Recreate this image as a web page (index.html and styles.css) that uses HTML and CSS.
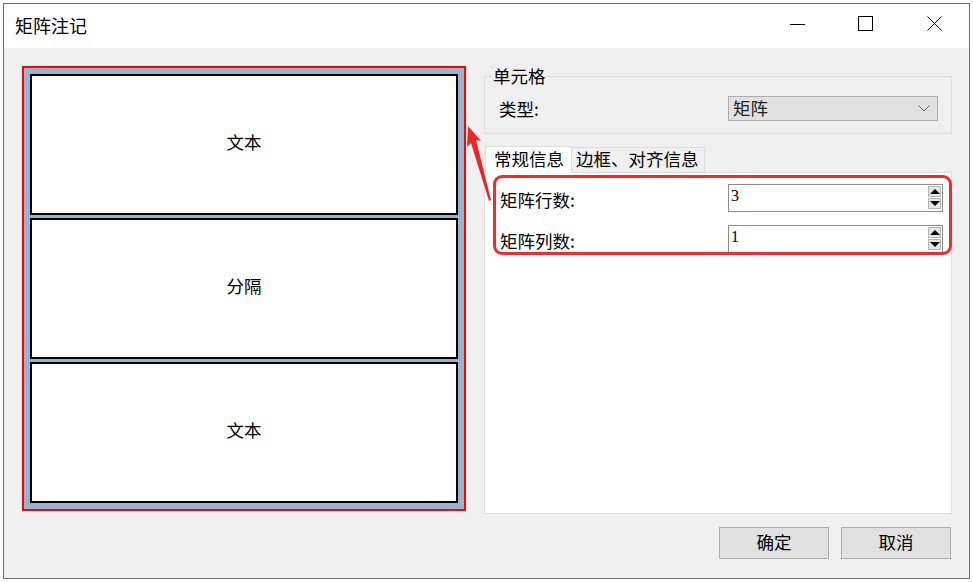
FILE: index.html
```html
<!DOCTYPE html>
<html>
<head>
    <title>矩阵注记</title>
    <link rel="stylesheet" href="styles.css">
</head>
<body>
    <div class="window">
        <div class="titlebar">
            <span class="title">矩阵注记</span>
            <div class="controls">
                <span class="ctl ctl-min">
                    <svg width="15" height="15" viewBox="0 0 15 15"><path d="M0 8.5h15" stroke="#000" stroke-width="1"/></svg>
                </span>
                <span class="ctl ctl-max">
                    <svg width="15" height="15" viewBox="0 0 15 15"><rect x="0.5" y="0.5" width="14" height="14" fill="none" stroke="#000" stroke-width="1"/></svg>
                </span>
                <span class="ctl ctl-close">
                    <svg width="15" height="15" viewBox="0 0 15 15"><path d="M0.5 0.5l14 14M14.5 0.5l-14 14" stroke="#000" stroke-width="1"/></svg>
                </span>
            </div>
        </div>

        <div class="client">
            <div class="preview">
                <div class="cell">文本</div>
                <div class="cell">分隔</div>
                <div class="cell">文本</div>
            </div>

            <div class="side">
                <fieldset class="group">
                    <legend>单元格</legend>
                    <div class="field-row">
                        <label>类型:</label>
                        <div class="combo">
                            <span>矩阵</span>
                            <svg width="12" height="7" viewBox="0 0 12 7"><path d="M0.5 0.5l5.5 5.5 5.5-5.5" fill="none" stroke="#606060" stroke-width="1"/></svg>
                        </div>
                    </div>
                </fieldset>

                <div class="tabs">
                    <span class="tab active">常规信息</span>
                    <span class="tab">边框、对齐信息</span>
                </div>

                <div class="tab-panel">
                    <div class="spin-row">
                        <label>矩阵行数:</label>
                        <div class="spin">
                            <span class="spin-value">3</span>
                            <span class="spin-btns"><span class="up"></span><span class="down"></span></span>
                        </div>
                    </div>
                    <div class="spin-row">
                        <label>矩阵列数:</label>
                        <div class="spin">
                            <span class="spin-value">1</span>
                            <span class="spin-btns"><span class="up"></span><span class="down"></span></span>
                        </div>
                    </div>
                    <!-- annotation frame drawn over the two rows -->
                    <div class="mark"></div>
                </div>

                <div class="actions">
                    <button class="btn">确定</button>
                    <button class="btn">取消</button>
                </div>
            </div>

            <svg class="arrow" width="32" height="86" viewBox="0 0 32 86">
                <polygon points="6,8 19,23 14,22 29,82 27,83 9,25 5,29" fill="#f52222"/>
            </svg>
        </div>
    </div>
</body>
</html>
```

FILE: styles.css
```css
body {
    margin: 0;
    background-color: #fff;
    font-family: "Noto Sans CJK SC", sans-serif;
    font-size: 17.5px;
    color: #000;
}

.window {
    margin: 3px 0 0 3px;
    width: 967px;
    height: 576px;
    box-sizing: border-box;
    border: 1px solid #707070;
    display: flex;
    flex-direction: column;
}

.titlebar {
    height: 44px;
    background-color: #fff;
    display: flex;
    align-items: center;
    justify-content: space-between;
}

.title {
    padding-left: 11px;
    font-size: 18px;
    line-height: 44px;
    margin-top: -2px;
}

.controls {
    display: flex;
    height: 44px;
}

.ctl {
    display: flex;
    align-items: center;
    justify-content: center;
    height: 44px;
    margin-top: -3px;
}

.ctl-min { width: 66px; }
.ctl-max { width: 70px; }
.ctl-close { width: 69px; }

.client {
    position: relative;
    flex: 1;
    background-color: #f0f0f0;
    display: flex;
    align-items: flex-start;
    padding: 18px 0 0 18px;
}

.preview {
    width: 428px;
    height: 429px;
    padding: 6px;
    border: 2px solid #ff0000;
    background-color: #98b3cf;
    display: flex;
    flex-direction: column;
    gap: 3px;
}

.cell {
    flex: 1;
    border: 2px solid #000;
    background-color: #fff;
    display: flex;
    align-items: center;
    justify-content: center;
    padding-bottom: 6px;
}

.side {
    margin-left: 18px;
    width: 468px;
    height: 493px;
    display: flex;
    flex-direction: column;
}

.group {
    margin: 0;
    padding: 10px 13px 12px 14px;
    border: 1px solid #dcdcdc;
    min-width: 0;
}

.group legend {
    margin-left: -7px;
    padding: 0 1px;
    line-height: 20px;
}

.field-row {
    display: flex;
    align-items: center;
    justify-content: space-between;
    height: 25px;
}

.combo {
    width: 210px;
    height: 25px;
    box-sizing: border-box;
    border: 1px solid #adadad;
    background-color: #e1e1e1;
    display: flex;
    align-items: center;
    justify-content: space-between;
    padding: 0 7px 0 4px;
    color: #222;
}

.combo span {
    line-height: 23px;
    margin-top: -2px;
}

.tabs {
    display: flex;
    align-items: flex-end;
    margin-top: 12px;
    margin-left: 1px;
    position: relative;
    z-index: 1;
}

.tab {
    height: 24px;
    line-height: 22px;
    padding: 0 5px 0 4px;
    border: 1px solid #dcdcdc;
    border-left: none;
    border-bottom: none;
    background-color: #f0f0f0;
}

.tab.active {
    height: 26px;
    padding: 0 7px 0 8px;
    border-left: 1px solid #dcdcdc;
    background-color: #fff;
    margin-bottom: -1px;
    line-height: 24px;
}

.tab-panel {
    position: relative;
    flex: 1;
    border: 1px solid #dcdcdc;
    background-color: #fff;
    padding: 11px 8px 0 15px;
    display: flex;
    flex-direction: column;
    gap: 13px;
}

.spin-row {
    display: flex;
    align-items: center;
    justify-content: space-between;
}

.spin-row label {
    margin-top: 2px;
}

.spin {
    position: relative;
    width: 215px;
    height: 28px;
    box-sizing: border-box;
    border: 1px solid #8c8c8c;
    background-color: #fff;
}

.spin-value {
    display: block;
    padding: 3px 0 0 2px;
    font-family: "Liberation Serif", serif;
    font-size: 16px;
    line-height: 16px;
}

.spin-btns {
    position: absolute;
    top: 1px;
    right: 1px;
    width: 13px;
    display: flex;
    flex-direction: column;
}

.spin-btns span {
    height: 11px;
    box-sizing: border-box;
    border: 1px solid #b4b4b4;
    background-color: #e6e6e6;
    display: flex;
    align-items: center;
    justify-content: center;
}

.spin-btns span + span {
    margin-top: 1px;
}

.spin-btns .up::after,
.spin-btns .down::after {
    content: "";
    border-left: 5px solid transparent;
    border-right: 5px solid transparent;
}

.spin-btns .up::after {
    border-bottom: 5px solid #000;
}

.spin-btns .down::after {
    border-top: 5px solid #000;
}

.mark {
    position: absolute;
    left: 8px;
    top: 2px;
    width: 459px;
    height: 80px;
    box-sizing: border-box;
    border: 3px solid #f52a2a;
    border-radius: 9px;
}

.actions {
    display: flex;
    justify-content: flex-end;
    gap: 12px;
    margin-top: 13px;
    padding-right: 1px;
}

.btn {
    width: 110px;
    height: 32px;
    border: 1px solid #adadad;
    background-color: #e1e1e1;
    font-family: "Noto Sans CJK SC", sans-serif;
    font-size: 17.5px;
    color: #000;
    padding: 0 0 3px;
}

.arrow {
    position: absolute;
    left: 458px;
    top: 70px;
}
```
